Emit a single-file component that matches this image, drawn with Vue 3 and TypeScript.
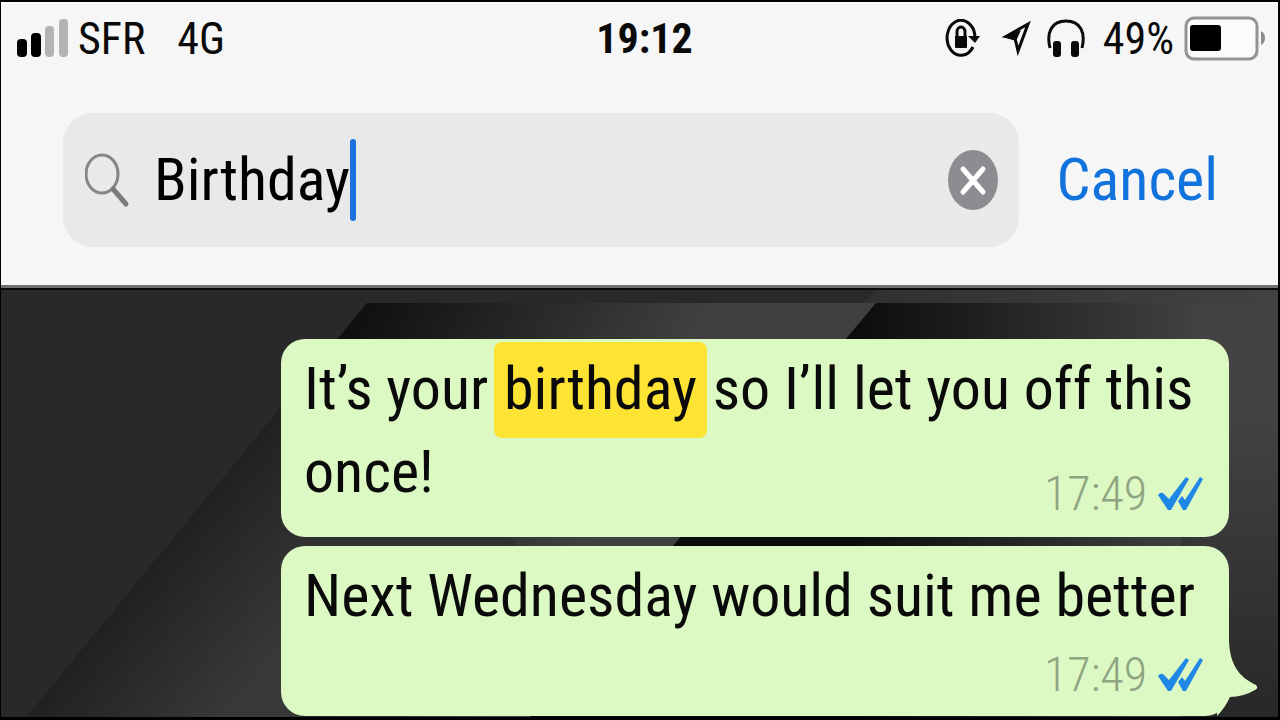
<script setup lang="ts">
import { ref } from 'vue'

interface Message {
  id: number
  before: string
  match: string
  after: string
  time: string
  compact: boolean
  tail: boolean
}

const query = ref('Birthday')

const messages: Message[] = [
  { id: 1, before: 'It’s your ', match: 'birthday', after: ' so I’ll let you off this once!', time: '17:49', compact: true, tail: false },
  { id: 2, before: 'Next Wednesday would suit me better', match: '', after: '', time: '17:49', compact: false, tail: true },
]
</script>

<template>
  <main class="phone">
    <header class="top">
      <div class="status">
        <div class="group left">
          <svg class="signal" width="52" height="40" viewBox="0 0 52 40" aria-hidden="true">
            <rect x="0" y="20" width="10" height="18" rx="4" fill="#000" />
            <rect x="14" y="14" width="10" height="24" rx="4" fill="#000" />
            <rect x="28" y="7" width="9" height="31" rx="4" fill="#b3b3b3" />
            <rect x="42" y="0" width="9" height="38" rx="4" fill="#b3b3b3" />
          </svg>
          <span class="carrier">SFR</span>
          <span>4G</span>
        </div>
        <time class="clock">19:12</time>
        <div class="group right">
          <svg width="36" height="40" viewBox="0 0 36 40" aria-hidden="true">
            <path d="M28 28A14 17.500 0 1 1 30 17" fill="none" stroke="#0a0a0a" stroke-width="3" />
            <path d="M23 17h12l-5 7z" fill="#0a0a0a" />
            <rect x="10" y="17" width="12" height="12" rx="1" fill="#0a0a0a" />
            <path d="M12 18v-5a4 5 0 0 1 8 0v5" fill="none" stroke="#0a0a0a" stroke-width="3" />
          </svg>
          <svg class="arrow" width="32" height="38" viewBox="0 0 32 38" aria-hidden="true">
            <path d="M27 4L5 16.500L14 18L17 31Z" fill="none" stroke="#0a0a0a" stroke-width="3" />
            <path d="M2 17L20 10L15 21Z" fill="#0a0a0a" />
          </svg>
          <svg class="phones" width="38" height="40" viewBox="0 0 38 40" aria-hidden="true">
            <path d="M3 29C-1 13 5 2 19 2S39 13 35 29" fill="none" stroke="#0a0a0a" stroke-width="3" />
            <rect x="6" y="22" width="8" height="16" rx="3" fill="#0a0a0a" />
            <rect x="24" y="22" width="8" height="16" rx="3" fill="#0a0a0a" />
          </svg>
          <span class="percent">49%</span>
          <svg class="battery" width="82" height="46" viewBox="0 0 82 46" aria-hidden="true">
            <rect x="2" y="2" width="71" height="41" rx="8" fill="#fbfbfb" stroke="#939393" stroke-width="3" />
            <rect x="6" y="9" width="31" height="26" rx="3" fill="#000" />
            <path d="M77 15q4 2 4 7t-4 7z" fill="#8c8c8c" />
          </svg>
        </div>
      </div>

      <form class="search" @submit.prevent>
        <div class="field">
          <svg class="lens" width="46" height="56" viewBox="0 0 46 56" aria-hidden="true">
            <ellipse cx="17" cy="22" rx="16" ry="19" fill="none" stroke="#858585" stroke-width="3" />
            <path d="M28 37L41 52" stroke="#7b7b7b" stroke-width="5" stroke-linecap="round" />
          </svg>
          <input v-model="query" class="query" type="text" aria-label="Search messages" />
          <span class="caret"></span>
          <button class="clear" type="button" aria-label="Clear search" @click="query = ''">
            <svg width="50" height="62" viewBox="0 0 50 62" aria-hidden="true">
              <ellipse cx="25" cy="31" rx="25" ry="30" fill="#8d8d91" />
              <path d="M15 20L35 43M35 20L15 43" stroke="#fff" stroke-width="5" stroke-linecap="round" />
            </svg>
          </button>
        </div>
        <button class="cancel" type="button">Cancel</button>
      </form>
    </header>

    <section class="chat">
      <svg class="wallpaper" viewBox="0 0 1277 427" preserveAspectRatio="none" aria-hidden="true">
        <defs>
          <linearGradient id="band" gradientUnits="userSpaceOnUse" x1="320" y1="70" x2="600" y2="220">
            <stop offset="0" stop-color="#0e0e0e" />
            <stop offset="1" stop-color="#404040" />
          </linearGradient>
          <linearGradient id="low" gradientUnits="userSpaceOnUse" x1="152" y1="273" x2="268" y2="368">
            <stop offset="0" stop-color="#212121" />
            <stop offset="1" stop-color="#383838" />
          </linearGradient>
          <linearGradient id="side" gradientUnits="userSpaceOnUse" x1="850" y1="0" x2="1200" y2="0">
            <stop offset="0" stop-color="#0c0c0c" />
            <stop offset="1" stop-color="#424242" />
          </linearGradient>
          <linearGradient id="edge" x1="0" y1="0" x2="0" y2="1">
            <stop offset="0.300" stop-color="#000" stop-opacity="0" />
            <stop offset="1" stop-color="#000" stop-opacity="0.400" />
          </linearGradient>
          <linearGradient id="strip" x1="0" y1="0" x2="1" y2="0">
            <stop offset="0" stop-color="#303030" />
            <stop offset="1" stop-color="#424242" />
          </linearGradient>
        </defs>
        <rect width="1277" height="427" fill="#292929" />
        <path d="M874 0H1277V13H863Z" fill="url(#strip)" />
        <path d="M366 13H875L529 427H26Z" fill="url(#band)" />
        <path d="M300 93V427H26Z" fill="url(#low)" />
        <path d="M299 240H505L525 270H299Z" fill="#303030" />
        <path d="M875 13H1277V427H529Z" fill="url(#side)" />
        <rect x="1180" width="97" height="427" fill="url(#edge)" />
      </svg>

      <article v-for="m in messages" :key="m.id" class="bubble" :class="{ compact: m.compact }">
        <p class="text">{{ m.before }}<mark v-if="m.match">{{ m.match }}</mark>{{ m.after }}</p>
        <div class="meta">
          <time>{{ m.time }}</time>
          <svg width="46" height="36" viewBox="0 0 46 36" aria-label="Read" role="img">
            <path d="M1 19q3-4 6-1l5 5L29 1l3 2L14 34h-3z" fill="#1f87e5" />
            <path d="M21 25l4-5 3 4L43 1l3 2L29 34h-3z" fill="#1f87e5" />
          </svg>
        </div>
        <svg v-if="m.tail" class="tail" width="42" height="75" viewBox="0 0 42 75" aria-hidden="true">
          <path d="M0 0H12C13 24 22 36 39 44Q42 47 38 49Q26 56 13 56Q8 67 0 75Z" fill="#dcf8c3" />
        </svg>
      </article>
    </section>
  </main>
</template>

<style>
body {
  margin: 0;
  background: #000;
}
</style>

<style scoped>
* {
  box-sizing: border-box;
}

.phone {
  display: flex;
  flex-direction: column;
  height: 100vh;
  overflow: hidden;
  border: solid #000;
  border-width: 2px 2px 3px 1px;
  background: #292929;
  color: #0a0a0a;
  font-family: 'Roboto Condensed', Roboto, 'Liberation Sans', sans-serif;
}

.top {
  padding-bottom: 38px;
  background: #f6f6f6;
  border-top: 2px solid #fff;
}

.status {
  display: grid;
  grid-template-columns: 1fr auto 1fr;
  align-items: center;
  height: 70px;
  padding: 0 6px 0 16px;
  font-size: 44px;
  line-height: 52px;
}

.group {
  display: flex;
  align-items: center;
}

.right {
  justify-content: flex-end;
}

.carrier {
  margin: 0 32px 0 9px;
}

.clock {
  font-size: 42px;
  font-weight: 700;
}

.arrow {
  margin-left: 20px;
}

.phones {
  margin-left: 14px;
}

.percent {
  margin: 0 10px 0 18px;
}

.battery {
  margin-right: 6px;
}

.search {
  display: flex;
  align-items: center;
  margin-top: 39px;
  padding: 0 60px 0 62px;
  font-size: 60px;
}

.field {
  display: flex;
  flex: 1;
  align-items: center;
  height: 134px;
  padding: 0 21px 0 22px;
  border-radius: 30px;
  background: #e9e9e9;
}

.lens {
  flex: none;
}

.query {
  field-sizing: content;
  min-width: 0;
  margin-left: 23px;
  padding: 0;
  border: 0;
  outline: 0;
  background: none;
  color: #000;
  font: inherit;
  line-height: 84px;
}

.caret {
  flex: none;
  width: 6px;
  height: 82px;
  border-radius: 3px;
  background: #1a73df;
}

.clear {
  display: flex;
  flex: none;
  margin-left: auto;
  padding: 0;
  border: 0;
  background: none;
}

.cancel {
  margin-left: 38px;
  padding: 0;
  border: 0;
  background: none;
  color: #1273dc;
  font: inherit;
  line-height: 84px;
}

.chat {
  position: relative;
  display: flex;
  flex: 1;
  flex-direction: column;
  gap: 9px;
  min-height: 0;
  padding: 51px 49px 0 280px;
  border-top: 3px solid #707070;
}

.wallpaper {
  position: absolute;
  inset: 0;
  width: 100%;
  height: 100%;
  border-top: 2px solid #0a0a0a;
}

.bubble {
  position: relative;
  display: grid;
  flex: none;
  row-gap: 3px;
  padding: 8px 26px 15px 23px;
  border-radius: 24px;
  background: #dcf8c3;
}

.text {
  grid-area: 1 / 1;
  margin: 0;
  padding-bottom: 9px;
  font-size: 60px;
  line-height: 83px;
}

mark {
  margin: 0 -8px;
  padding: 11px 10px 14px;
  border-radius: 8px;
  background: #fde333;
  color: inherit;
}

.meta {
  display: flex;
  align-items: center;
  justify-self: end;
  gap: 10px;
  color: #8fa481;
  font-size: 48px;
  font-weight: 300;
  line-height: 52px;
}

.compact .meta {
  grid-area: 1 / 1;
  align-self: end;
  margin-bottom: 2px;
}

.tail {
  position: absolute;
  right: -30px;
  bottom: 0;
}
</style>
